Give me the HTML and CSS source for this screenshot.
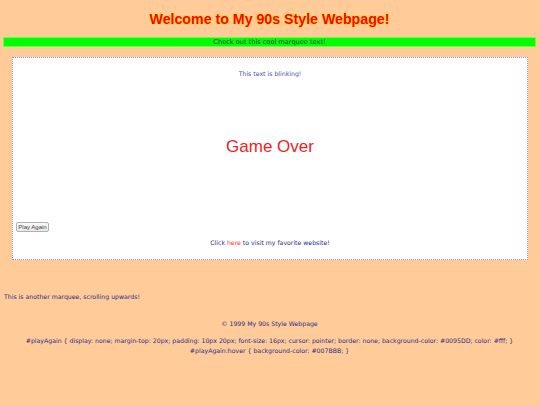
FILE: index.html
```html
<!DOCTYPE html>
<html>
<head>
<meta charset="utf-8">
<title>My 90s Style Webpage</title>
<link rel="stylesheet" href="styles.css">
</head>
<body>
<h1 class="title">Welcome to My 90s Style Webpage!</h1>
<div class="marquee">Check out this cool marquee text!</div>
<div class="box">
  <p class="blink">This text is blinking!</p>
  <div class="game"><span class="game-over">Game Over</span></div>
  <button class="play" type="button">Play Again</button>
  <p class="click">Click <a class="link" href="#">here</a> to visit my favorite website!</p>
</div>
<div class="upmarquee">This is another marquee, scrolling upwards!</div>
<p class="copy">© 1999 My 90s Style Webpage</p>
<p class="code">#playAgain { display: none; margin-top: 20px; padding: 10px 20px; font-size: 16px; cursor: pointer; border: none; background-color: #0095DD; color: #fff; }<br>#playAgain:hover { background-color: #007BBB; }</p>
</body>
</html>
```
FILE: styles.css
```css
html, body {
  background: #ffcc99;
}
body {
  margin: 0;
  padding: 0 4px 0 3px;
  font-family: "DejaVu Sans", "Noto Sans", sans-serif;
  font-size: 6.2px;
  color: #2b2b8c;
}
.title {
  margin: 0 0 9px;
  padding-top: 11px;
  font-family: "Liberation Sans", Arial, sans-serif;
  font-size: 14.2px;
  line-height: 17px;
  font-weight: bold;
  text-align: center;
  color: #ff0000;
  text-shadow: 0 0 2px #ffee00, 0 0 1px #ffdd00;
}
.marquee {
  box-sizing: border-box;
  height: 10px;
  border: 1px solid #66ff44;
  background: #00ff00;
  color: #1a3a5a;
  font-size: 6.6px;
  line-height: 8px;
  text-align: center;
}
.box {
  box-sizing: border-box;
  height: 203px;
  margin: 10px 8px 0 9px;
  border: 1px dotted #a090dc;
  background: #ffffff;
  padding-top: 11px;
}
.blink {
  margin: 0;
  line-height: 10px;
  text-align: center;
  color: #4a4ab4;
}
.game {
  height: 136px;
  display: flex;
  align-items: center;
  justify-content: center;
}
.game-over {
  font-family: "Liberation Sans", Arial, sans-serif;
  font-size: 17px;
  color: #ee2222;
}
.play {
  display: block;
  box-sizing: border-box;
  width: 33px;
  height: 10px;
  margin: 7px 0 0 3px;
  padding: 0;
  border: 1px solid #b0b0b0;
  border-radius: 2px;
  background: linear-gradient(#fafafa, #e8e8e8);
  font-family: "Liberation Sans", Arial, sans-serif;
  font-size: 6px;
  line-height: 8px;
  color: #444444;
}
.click {
  margin: 6px 0 0;
  line-height: 10px;
  text-align: center;
}
.link {
  color: #ff3333;
  text-decoration: none;
}
.upmarquee {
  padding: 32px 0 0 1px;
  line-height: 10px;
}
.copy {
  margin: 17px 0 0;
  line-height: 10px;
  text-align: center;
}
.code {
  margin: 7px 0 0;
  line-height: 10px;
  text-align: center;
}
```
